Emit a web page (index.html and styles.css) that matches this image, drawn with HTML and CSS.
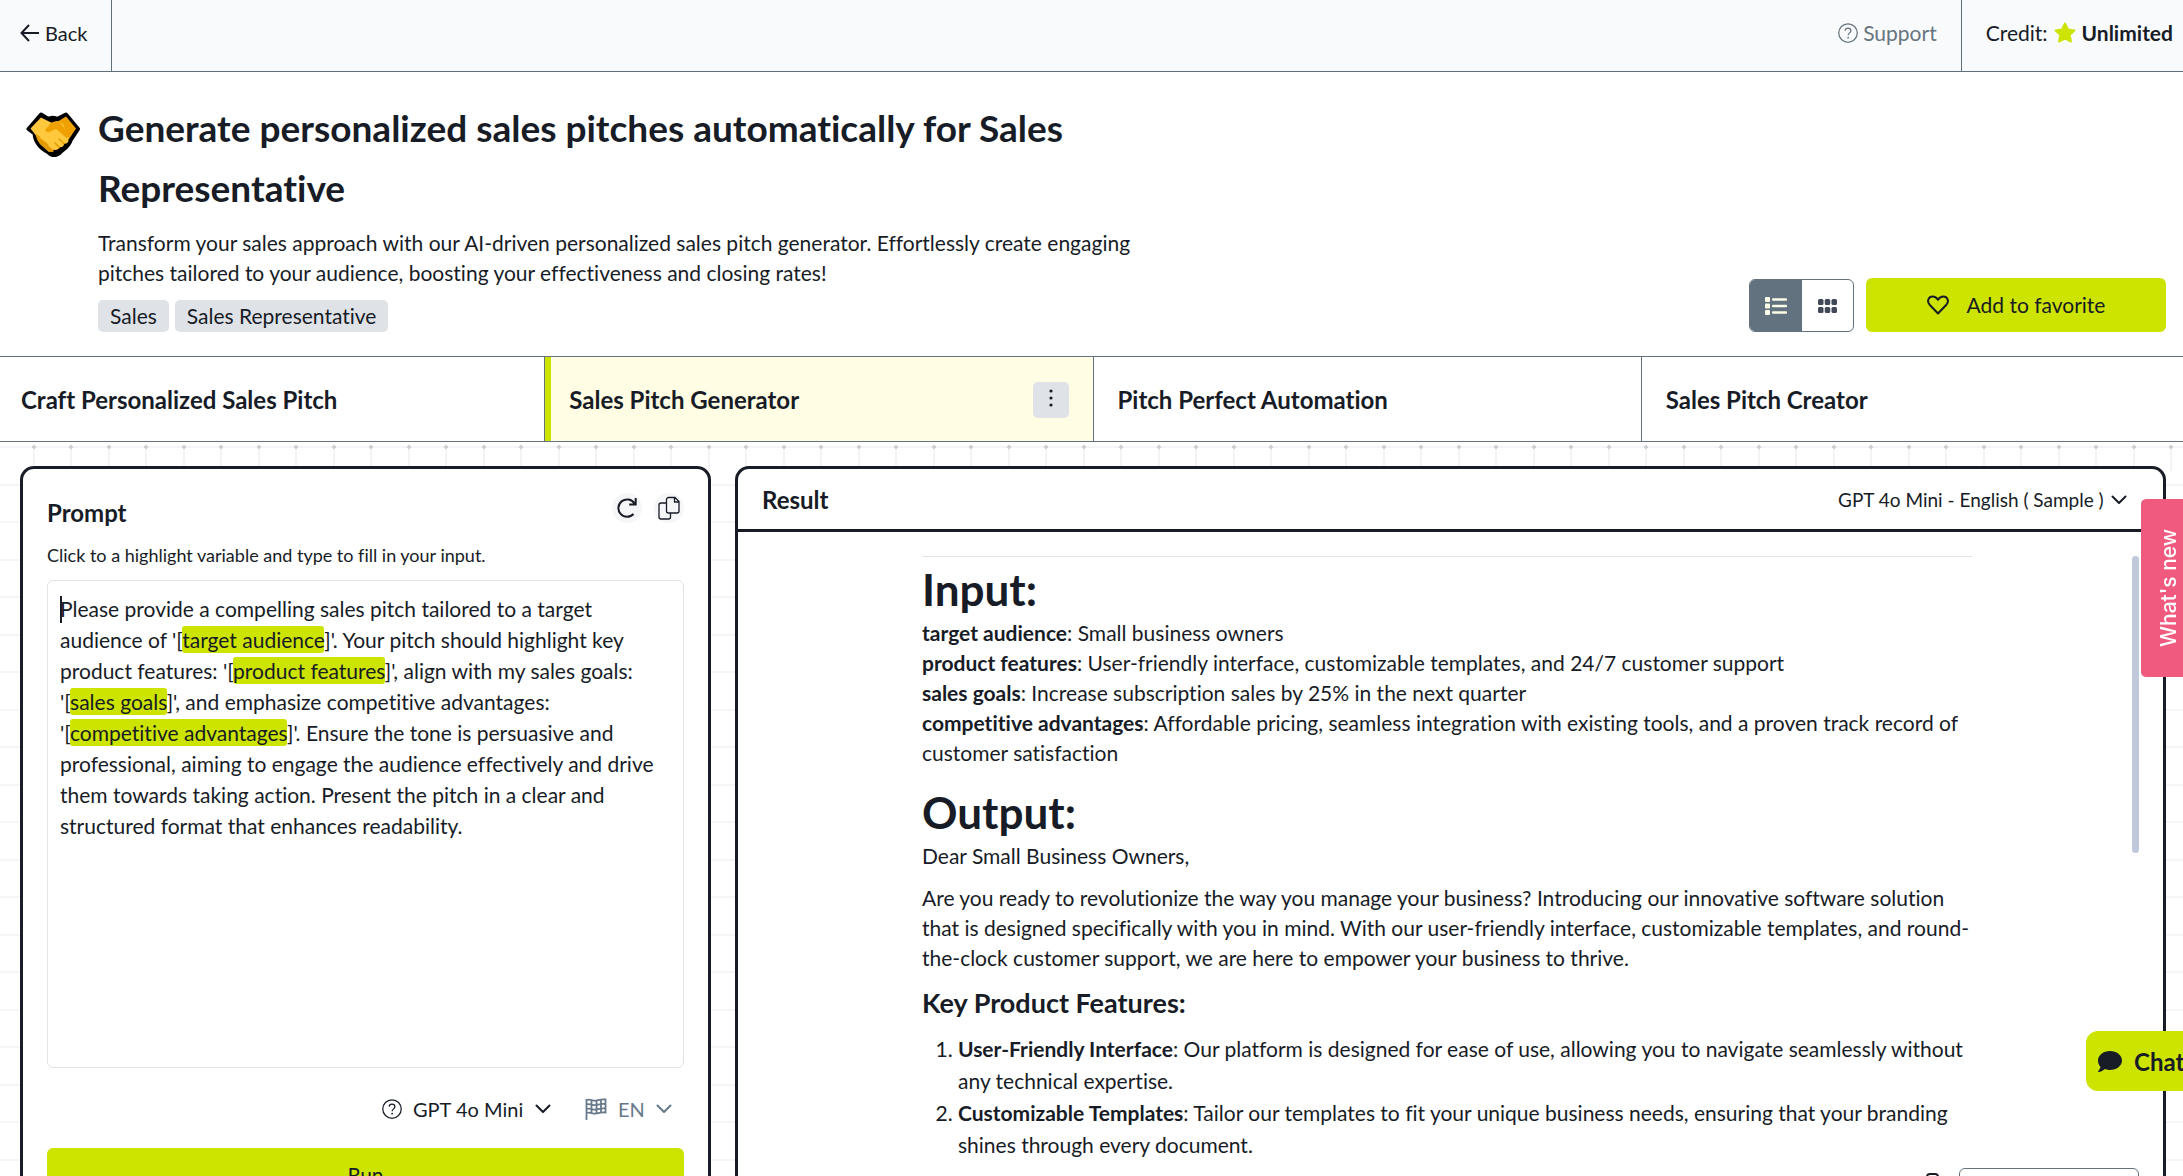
FILE: index.html
```
<!DOCTYPE html>
<html lang="en">
<head>
<meta charset="utf-8">
<meta name="viewport" content="width=device-width, initial-scale=1">
<title>Sales Pitch Generator</title>
<link rel="stylesheet" href="styles.css">
</head>
<body>
<svg class="sprite" aria-hidden="true">
  <symbol id="help" viewBox="0 0 16 16">
    <circle cx="8" cy="8" r="7.4" fill="none" stroke="currentColor" stroke-width="1"/>
    <path d="M5.7 6.1C5.8 4.8 6.7 4.1 8 4.1s2.3.8 2.3 2c0 1.8-2.2 1.8-2.2 3.7" fill="none" stroke="currentColor" stroke-width="1"/>
    <circle cx="8.1" cy="11.7" r=".7" fill="currentColor"/>
  </symbol>
  <symbol id="chevron" viewBox="0 0 16 10">
    <path d="M1.5 1.5 8 8l6.500-6.500" fill="none" stroke="currentColor" stroke-width="2" stroke-linecap="round" stroke-linejoin="round"/>
  </symbol>
</svg>

<header class="topbar">
  <a class="back" href="#">
    <svg width="20" height="18" viewBox="0 0 20 18" aria-hidden="true"><path d="M9 1 1.500 9 9 17M1.500 9H19" fill="none" stroke="currentColor" stroke-width="2"/></svg>
    Back
  </a>
  <a class="support" href="#"><svg width="20" height="20" aria-hidden="true"><use href="#help"/></svg>Support</a>
  <div class="credit">Credit:
    <svg width="22" height="22" viewBox="0 0 22 22" aria-hidden="true"><path d="m11 1.500 2.900 6 6.600.900-4.800 4.600 1.200 6.500-5.900-3.100-5.900 3.100 1.200-6.500L1.500 8.400l6.600-.900z" fill="#cde300" stroke="#cde300" stroke-width="2" stroke-linejoin="round"/></svg>
    <strong>Unlimited</strong>
  </div>
</header>

<section class="hero">
  <svg class="hero-icon" width="54" height="45" viewBox="0 0 54 45" aria-hidden="true">
    <path d="M2.500 17 15 2.500l7.500 4.500c2-1.800 6.500-1.800 8.500 0L40 2.500 52 17l-7.500 11.500c-1.500 6-7 8.500-11 12.500-3.500 3-8 3-11-.500C17 37 9 32 8.500 21.500z" fill="#000" stroke="#000" stroke-width="4" stroke-linejoin="round"/>
    <path d="M31 10 40 4.500 50 16.500l-7 10.500-4 1z" fill="#efa100"/>
    <path d="m20 13 11-4 6 3 6 15-6 6-14 7-9-8-4-9z" fill="#ffc83d"/>
    <path d="M4.500 16.500 15 5.500l11 5.500-8 9 4 13-8-4-6-8z" fill="#ffc83d"/>
    <path d="M10 22c0 9 7 12 13 17 2 1.500 4 1.500 5 0-2-3-6-4-6-7 0-4-6-6-12-10z" fill="#e59a00"/>
    <path d="M19.500 17.500 25 11c3-2 6-2 9-.500l9 12-2 4-11-9.500c-2 2-6 4-9 3-1.500-.500-2-1.500-1.500-2.500z" fill="#efa100"/>
    <path d="m21 21 9-4 12.500 11c0 3-2.500 4-4.500 3.500 0 3-2 4-4.500 3.500-1 4-7 4.500-9-1L13 25z" fill="#ffc83d"/>
    <path d="m33 27 5 4.500M29 31l4.500 4.500" stroke="#e59a00" stroke-width="1.500" stroke-linecap="round"/>
  </svg>
  <div class="hero-text">
    <h1>Generate personalized sales pitches automatically for Sales Representative</h1>
    <p>Transform your sales approach with our AI-driven personalized sales pitch generator. Effortlessly create engaging pitches tailored to your audience, boosting your effectiveness and closing rates!</p>
    <ul class="tags"><li>Sales</li><li>Sales Representative</li></ul>
  </div>
  <div class="hero-actions">
    <div class="view-toggle">
      <button type="button" class="on" aria-label="List view">
        <svg width="22" height="18" viewBox="0 0 22 18" aria-hidden="true"><g fill="currentColor"><rect width="5" height="5" rx="1"/><rect y="6.500" width="5" height="5" rx="1"/><rect y="13" width="5" height="5" rx="1"/><rect x="7" y="1.300" width="15" height="2.500" rx="1"/><rect x="7" y="7.800" width="15" height="2.500" rx="1"/><rect x="7" y="14.300" width="15" height="2.500" rx="1"/></g></svg>
      </button>
      <button type="button" aria-label="Grid view">
        <svg width="19" height="14" viewBox="0 0 19 14" aria-hidden="true"><g fill="currentColor"><rect width="5.500" height="6" rx="1.500"/><rect x="6.750" width="5.500" height="6" rx="1.500"/><rect x="13.500" width="5.500" height="6" rx="1.500"/><rect y="8" width="5.500" height="6" rx="1.500"/><rect x="6.750" y="8" width="5.500" height="6" rx="1.500"/><rect x="13.500" y="8" width="5.500" height="6" rx="1.500"/></g></svg>
      </button>
    </div>
    <button type="button" class="favorite">
      <svg width="22" height="20" viewBox="0 0 22 20" aria-hidden="true"><path d="M11 18.500 2.600 9.700C-.5 6.200 1.500 1.500 5.700 1.500c2.300 0 4 1.200 5.300 3.300 1.300-2.100 3-3.300 5.300-3.300 4.200 0 6.200 4.700 3.100 8.200z" fill="none" stroke="currentColor" stroke-width="2" stroke-linejoin="round"/></svg>
      Add to favorite
    </button>
  </div>
</section>

<nav class="tabs">
  <a href="#">Craft Personalized Sales Pitch</a>
  <div class="tab-active">
    <a href="#" aria-current="page">Sales Pitch Generator</a>
    <button type="button" class="more" aria-label="More options"><svg width="4" height="18" viewBox="0 0 4 18" aria-hidden="true"><g fill="currentColor"><circle cx="2" cy="2" r="1.600"/><circle cx="2" cy="9" r="1.600"/><circle cx="2" cy="16" r="1.600"/></g></svg></button>
  </div>
  <a href="#">Pitch Perfect Automation</a>
  <a href="#">Sales Pitch Creator</a>
</nav>

<main class="workspace">
  <section class="card prompt">
    <div class="prompt-head">
      <h2>Prompt</h2>
      <button type="button" class="round" aria-label="Reset"><svg width="20" height="22" viewBox="0 0 20 22" aria-hidden="true"><path d="M17.500 6.500A8.700 8.700 0 1 0 16.500 17M18.700 1v6.500h-6.500" fill="none" stroke="currentColor" stroke-width="2"/></svg></button>
      <button type="button" class="round" aria-label="Copy"><svg width="22" height="24" viewBox="0 0 22 24" aria-hidden="true"><path d="M10.500 1.500h6.500l4 4v9.500a2 2 0 0 1-2 2h-8.500a2 2 0 0 1-2-2V3.500a2 2 0 0 1 2-2zM16.500 1.500v4.500h4.500M8.500 7H3a2 2 0 0 0-2 2v12a2 2 0 0 0 2 2h7.500a2 2 0 0 0 2-2v-4" fill="none" stroke="currentColor" stroke-width="1.300"/></svg></button>
    </div>
    <p class="hint" id="hint">Click to a highlight variable and type to fill in your input.</p>
    <div class="editor" role="textbox" aria-multiline="true" aria-labelledby="hint" contenteditable="true" spellcheck="false"><span class="caret"></span>Please provide a compelling sales pitch tailored to a target audience of '[<mark>target audience</mark>]'. Your pitch should highlight key product features: '[<mark>product features</mark>]', align with my sales goals: '[<mark>sales goals</mark>]', and emphasize competitive advantages: '[<mark>competitive advantages</mark>]'. Ensure the tone is persuasive and professional, aiming to engage the audience effectively and drive them towards taking action. Present the pitch in a clear and structured format that enhances readability.</div>
    <div class="options">
      <label class="picker"><svg width="20" height="20" role="img" aria-label="Model"><use href="#help"/></svg><select><option>GPT 4o Mini</option></select><svg width="16" height="10" aria-hidden="true"><use href="#chevron"/></svg></label>
      <label class="picker muted"><svg width="22" height="22" viewBox="0 0 22 22" role="img" aria-label="Language"><path d="M1.500 1v21M1.500 2c4-1.500 6 1.500 10 .5s5-1.500 9-1v13c-4-.5-5 0-9 1s-6-2-10-.5M1.500 6.500c4-1.500 6 1.500 10 .5s5-1.500 9-1M1.500 11c4-1.500 6 1.500 10 .5s5-1.500 9-1M6.500 2v13M11.500 2.500v13M16 1.500v13" fill="none" stroke="currentColor" stroke-width="1.800"/></svg><select><option>EN</option></select><svg width="16" height="10" aria-hidden="true"><use href="#chevron"/></svg></label>
    </div>
    <button type="button" class="run">Run</button>
  </section>

  <section class="card result">
    <div class="result-head">
      <h2>Result</h2>
      <label class="picker sample"><select aria-label="Result version"><option>GPT 4o Mini - English ( Sample )</option></select><svg width="16" height="10" aria-hidden="true"><use href="#chevron"/></svg></label>
    </div>
    <div class="result-body">
      <span class="scroll-thumb"></span>
      <article>
        <h3>Input:</h3>
        <p><strong>target audience</strong>: Small business owners<br><strong>product features</strong>: User-friendly interface, customizable templates, and 24/7 customer support<br><strong>sales goals</strong>: Increase subscription sales by 25% in the next quarter<br><strong>competitive advantages</strong>: Affordable pricing, seamless integration with existing tools, and a proven track record of customer satisfaction</p>
        <h3>Output:</h3>
        <p>Dear Small Business Owners,</p>
        <p>Are you ready to revolutionize the way you manage your business? Introducing our innovative software solution that is designed specifically with you in mind. With our user-friendly interface, customizable templates, and round-the-clock customer support, we are here to empower your business to thrive.</p>
        <h4>Key Product Features:</h4>
        <ol>
          <li><strong>User-Friendly Interface</strong>: Our platform is designed for ease of use, allowing you to navigate seamlessly without any technical expertise.</li>
          <li><strong>Customizable Templates</strong>: Tailor our templates to fit your unique business needs, ensuring that your branding shines through every document.</li>
        </ol>
      </article>
    </div>
    <div class="result-foot">
      <button type="button" class="plain" aria-label="Copy result"><svg width="13" height="34" viewBox="0 0 13 34" aria-hidden="true"><rect x="1" y="1" width="11" height="32" rx="3" fill="none" stroke="currentColor" stroke-width="2"/></svg></button>
      <button type="button" class="outline" aria-label="Feedback"></button>
    </div>
  </section>
</main>

<a class="whats-new" href="#">What's new</a>
<button type="button" class="chat"><svg width="24" height="22" viewBox="0 0 24 22" aria-hidden="true"><path d="M12 0c6.600 0 12 4.200 12 9.500S18.600 19 12 19c-1.800 0-3.500-.3-5-.9C5.300 19.600 2.900 21 .6 21c-.5 0-.7-.6-.3-1 1.400-1.400 2-3 2.100-4.200C.9 14.100 0 11.900 0 9.500 0 4.200 5.400 0 12 0z" fill="currentColor"/></svg>Chat</button>
</body>
</html>
```
FILE: styles.css
```
* { box-sizing: border-box; }

body {
  margin: 0;
  height: 100vh;
  overflow: hidden;
  display: flex;
  flex-direction: column;
  background: #fff;
  color: #171c26;
  font: 21px/30px Lato, "Noto Sans", sans-serif;
  font-variant-ligatures: none;
}

h1, h2, h3, h4, p, ul, ol { margin: 0; padding: 0; }
a { color: inherit; text-decoration: none; }
button, select {
  margin: 0;
  padding: 0;
  border: 0;
  background: none;
  color: inherit;
  font: inherit;
  cursor: pointer;
}
button { display: flex; align-items: center; justify-content: center; }
select { appearance: none; }
svg { flex: none; display: block; }
.sprite { position: absolute; width: 0; height: 0; }

/* Top bar */
.topbar {
  flex: none;
  display: flex;
  height: 72px;
  background: #f9fafc;
  border-bottom: 1px solid #5f717d;
}
.topbar > * { display: flex; align-items: center; padding-bottom: 6px; }
.back { gap: 5px; padding-left: 20px; padding-right: 24px; border-right: 1px solid #5f717d; font-size: 20px; }
.support { gap: 5px; margin-left: auto; padding-right: 24px; color: #67757f; }
.credit { gap: 6px; padding-left: 24px; padding-right: 10px; border-left: 1px solid #5f717d; }

/* Title area */
.hero {
  flex: none;
  display: flex;
  align-items: flex-start;
  padding: 26px 17px 24px 26px;
}
.hero-icon { margin: 14px 18px 0 0; }
.hero-text { width: 1080px; }
h1 { font-size: 37px; line-height: 60px; font-weight: 700; }
.hero-text p { margin-top: 10px; max-width: 1040px; }
.tags { display: flex; gap: 6px; margin-top: 12px; list-style: none; }
.tags li { padding: 1px 12px; border-radius: 5px; background: #dfe2e7; }
.hero-actions { display: flex; align-items: flex-end; align-self: flex-end; gap: 12px; margin-left: auto; }
.view-toggle {
  display: flex;
  width: 105px;
  height: 53px;
  border: 1px solid #62727e;
  border-radius: 6px;
  overflow: hidden;
  color: #414858;
}
.view-toggle button { flex: 1; }
.view-toggle .on { background: #62727e; color: #fbfde8; }
.favorite {
  gap: 18px;
  width: 300px;
  height: 54px;
  border-radius: 6px;
  background: #cde300;
}

/* Prompt tabs */
.tabs {
  flex: none;
  display: grid;
  grid-template-columns: repeat(4, 1fr);
  height: 86px;
  margin: 0 -6px 0 -4px;
  border: solid #62727e;
  border-width: 1px 0;
  font-size: 24px;
  font-weight: 700;
}
.tabs > * { display: flex; align-items: center; padding: 4px 24px 2px; border-left: 1px solid #62727e; }
.tabs .tab-active {
  justify-content: space-between;
  background: #fffde3;
  box-shadow: inset 6px 0 #cde300;
}
.more { width: 36px; height: 36px; padding-bottom: 4px; border-radius: 5px; background: #dfe2e7; }

/* Workspace over a faint ruled sheet */
.workspace {
  flex: none;
  display: grid;
  grid-template-columns: 691fr 1431fr;
  gap: 24px;
  padding: 24px 17px 24px 20px;
  background:
    radial-gradient(circle at 34px 5px, #cfd0d4 2px, transparent 2px) 0 0 / 75px 40px repeat-x,
    radial-gradient(circle at 34px 5px, #cfd0d4 2px, transparent 2px) 37px 0 / 75px 40px repeat-x,
    linear-gradient(90deg, transparent 33px, #f3f3f5 33px 35px, transparent 35px) 0 5px / 75px 24px repeat-x,
    linear-gradient(90deg, transparent 33px, #f3f3f5 33px 35px, transparent 35px) 37px 5px / 75px 24px repeat-x,
    linear-gradient(#f5f5f7 2px, transparent 2px) 0 4px / 100% 75px,
    linear-gradient(#f5f5f7 2px, transparent 2px) 0 42px / 100% 75px;
}
.card {
  border: 3px solid #171c26;
  border-radius: 14px;
  background: #fff;
}
h2 { font-size: 24px; line-height: 30px; font-weight: 700; }

.prompt { padding: 24px; }
.prompt-head { display: flex; align-items: flex-start; gap: 12px; }
.prompt-head h2 { margin: 5px auto 0 0; }
.round { width: 30px; height: 30px; border-radius: 50%; background: #f5f6f8; }
.hint { margin-top: 12px; font-size: 18px; }
.editor {
  margin-top: 10px;
  height: 488px;
  padding: 12px;
  border: 1px solid #e1e4e6;
  border-radius: 6px;
  line-height: 31px;
  outline: 0;
}
.editor mark { padding: 1px 0; border-radius: 3px; background: #cde300; color: inherit; }
.caret { display: inline-block; width: 2px; height: 27px; margin-right: -2px; vertical-align: -6px; background: #171c26; }
.options { display: flex; justify-content: flex-end; gap: 34px; padding: 26px 12px 24px; }
.picker { display: flex; align-items: center; gap: 11px; font-size: 20px; }
.picker.muted { color: #67798a; }
.run {
  width: 100%;
  height: 54px;
  border-radius: 6px;
  background: #cde300;
}

.result { display: flex; flex-direction: column; min-width: 0; }
.result-head {
  display: flex;
  align-items: center;
  justify-content: space-between;
  height: 63px;
  padding: 2px 36px 0 24px;
  border-bottom: 3px solid #171c26;
}
.sample { gap: 6px; font-size: 19px; }
.result-body { position: relative; flex: 1; overflow: hidden; padding: 24px 31px 0 24px; }
article { max-width: 1050px; margin: 0 auto; border-top: 1px solid #e1e2e4; }
article h3 { margin-top: 16px; font-size: 44px; line-height: 57px; font-weight: 700; }
article h3:first-child { margin-top: 4px; }
article p { margin-bottom: 12px; }
article h4 { font-size: 27px; line-height: 36px; font-weight: 700; }
article ol { margin-top: 12px; padding-left: 36px; line-height: 32px; }
.scroll-thumb {
  position: absolute;
  top: 24px;
  right: 24px;
  width: 7px;
  height: 297px;
  border-radius: 4px;
  background: #c0c8dc;
}
.result-foot { display: flex; align-items: center; justify-content: flex-end; gap: 20px; padding: 0 24px 14px; }
.outline { width: 180px; height: 44px; border: 1px solid #62727e; border-radius: 6px; }

/* Floating controls, partly tucked behind the right edge */
.whats-new {
  position: fixed;
  top: 499px;
  right: -14px;
  width: 56px;
  height: 178px;
  display: flex;
  align-items: center;
  justify-content: center;
  border-radius: 0 5px 5px 0;
  background: #ef5a7e;
  color: #fff;
  font: 500 21px/28px Inter, sans-serif;
  writing-mode: vertical-rl;
  transform: rotate(180deg);
}
.chat {
  position: fixed;
  right: -24px;
  bottom: 85px;
  gap: 12px;
  width: 121px;
  height: 60px;
  padding: 2px 0 0 12px;
  justify-content: flex-start;
  border-radius: 12px;
  background: #cde300;
  font-size: 24px;
  font-weight: 700;
}
```
